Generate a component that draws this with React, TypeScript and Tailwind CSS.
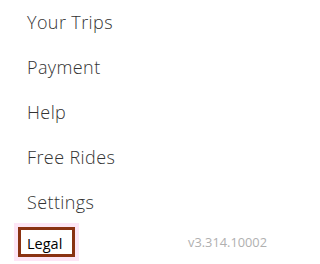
const menuItems = ["Your Trips", "Payment", "Help", "Free Rides", "Settings"];

const App = () => {
  return (
    <div className="w-[301px] h-[264px] bg-white overflow-hidden">
      <ul className="pl-[27px]">
        {menuItems.map((item) => (
          <li
            key={item}
            className="h-[45px] leading-[45px] text-[18px] tracking-[0.4px] font-light text-[#333] font-['Open_Sans',sans-serif]"
          >
            {item}
          </li>
        ))}
      </ul>

      <div className="mt-[2px] flex items-start justify-between pl-[18px] pr-[34px]">
        <a
          href="#"
          className="block h-[30px] w-[57px] border-[3px] border-[#8a3212] pl-[6px] pt-[4px] leading-[20px] text-[14.5px] text-black font-['Open_Sans',sans-serif] shadow-[0_0_0_4px_#fde6f6]"
        >
          Legal
        </a>
        <span className="mt-[7px] leading-[16px] text-[12.8px] text-[#b0b0b0] font-['Open_Sans',sans-serif]">
          v3.314.10002
        </span>
      </div>
    </div>
  );
};

export default App;
